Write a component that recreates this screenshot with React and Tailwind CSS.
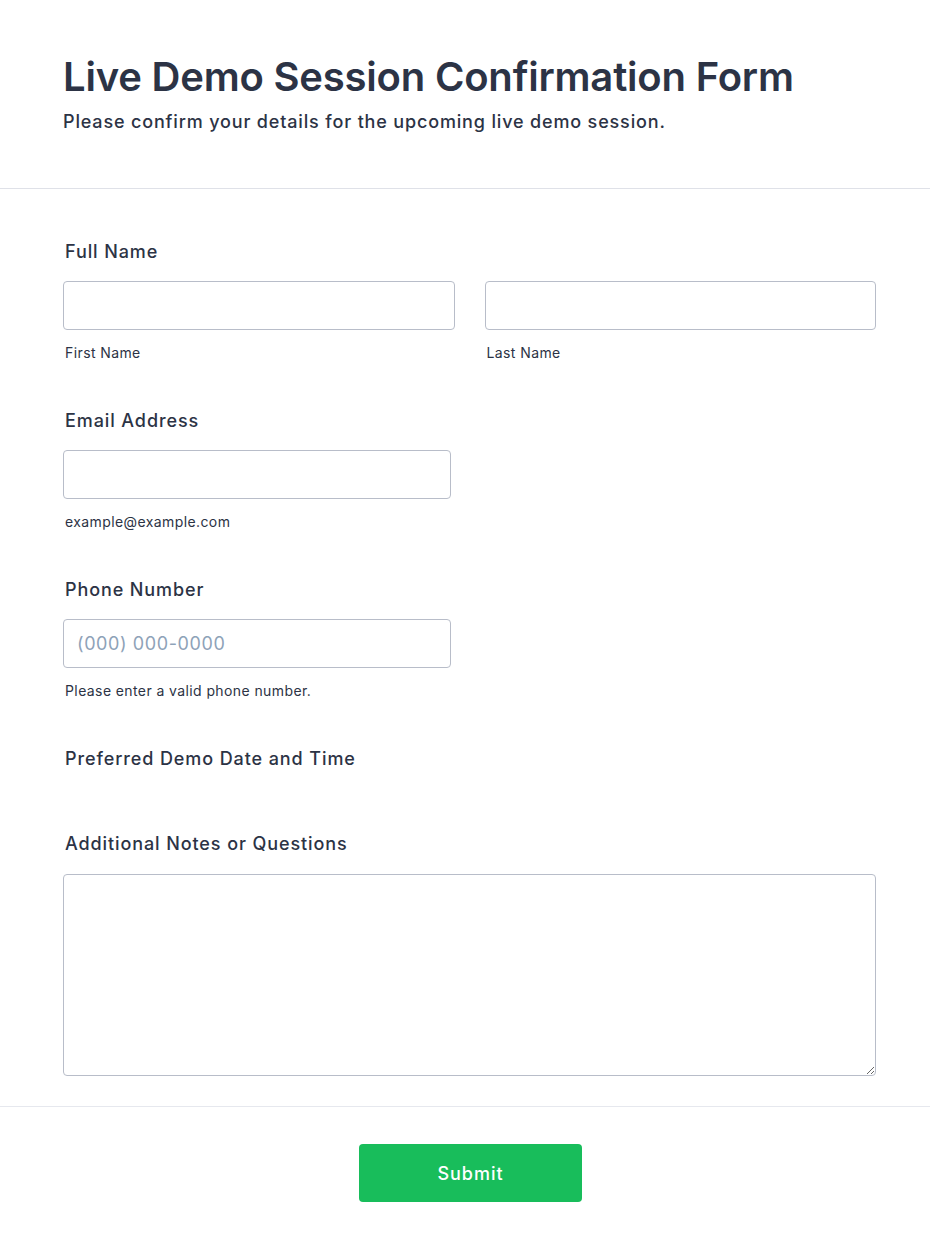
export default function App() {
  const label = "block pl-[2px] text-[18px] leading-6 font-medium tracking-[0.9px] text-[#2c3345]";
  const input = "block w-full h-[49px] rounded-[4px] border border-[#b8bdc9] bg-white px-[13px] text-[18px] tracking-[0.6px] text-[#2c3345] placeholder-[#8ea2b8] outline-none";
  const sub = "block pl-[2px] mt-[14px] text-[14px] leading-[18px] tracking-[0.4px] text-[#2c3345]";
  return (
    <div className="min-h-[1252px] bg-white" style={{ fontFamily: "Inter, 'Noto Sans', sans-serif" }}>
      <header className="px-[63px] pt-[53px] pb-[54px] border-b border-[#dfe1e8]">
        <h1 className="text-[40px] leading-[48px] font-semibold tracking-[-0.2px] text-[#2c3345]">
          Live Demo Session Confirmation Form
        </h1>
        <p className="mt-[9px] text-[18px] leading-6 font-medium tracking-[0.84px] text-[#2c3345]">
          Please confirm your details for the upcoming live demo session.
        </p>
      </header>

      <form className="pl-[63px] pr-[54px] pt-[51px] pb-[30px] border-b border-[#e6e8ee]">
        <div>
          <span className={label}>Full Name</span>
          <div className="mt-[17px] grid grid-cols-2 gap-[30px]">
            <div>
              <input className={input} />
              <span className={sub}>First Name</span>
            </div>
            <div>
              <input className={input} />
              <span className={sub}>Last Name</span>
            </div>
          </div>
        </div>

        <div className="mt-[47px]">
          <span className={label}>Email Address</span>
          <div className="mt-[17px] w-[388px]">
            <input className={input} />
            <span className={sub}>example@example.com</span>
          </div>
        </div>

        <div className="mt-[47px]">
          <span className={label}>Phone Number</span>
          <div className="mt-[17px] w-[388px]">
            <input className={input} placeholder="(000) 000-0000" />
            <span className={sub}>Please enter a valid phone number.</span>
          </div>
        </div>

        <div className="mt-[47px]">
          <span className={label}>Preferred Demo Date and Time</span>
        </div>

        <div className="mt-[61px]">
          <span className={label}>Additional Notes or Questions</span>
          <textarea className="mt-[18px] block w-full h-[202px] rounded-[4px] border border-[#b8bdc9] bg-white p-3 text-[16px] outline-none resize-y" />
        </div>
      </form>

      <div className="flex justify-center pl-[11px] pt-[37px] pb-[50px]">
        <button type="button" className="w-[223px] h-[58px] rounded-[4px] bg-[#18bd5b] text-white text-[18px] font-medium tracking-[1px]">
          Submit
        </button>
      </div>
    </div>
  );
}
